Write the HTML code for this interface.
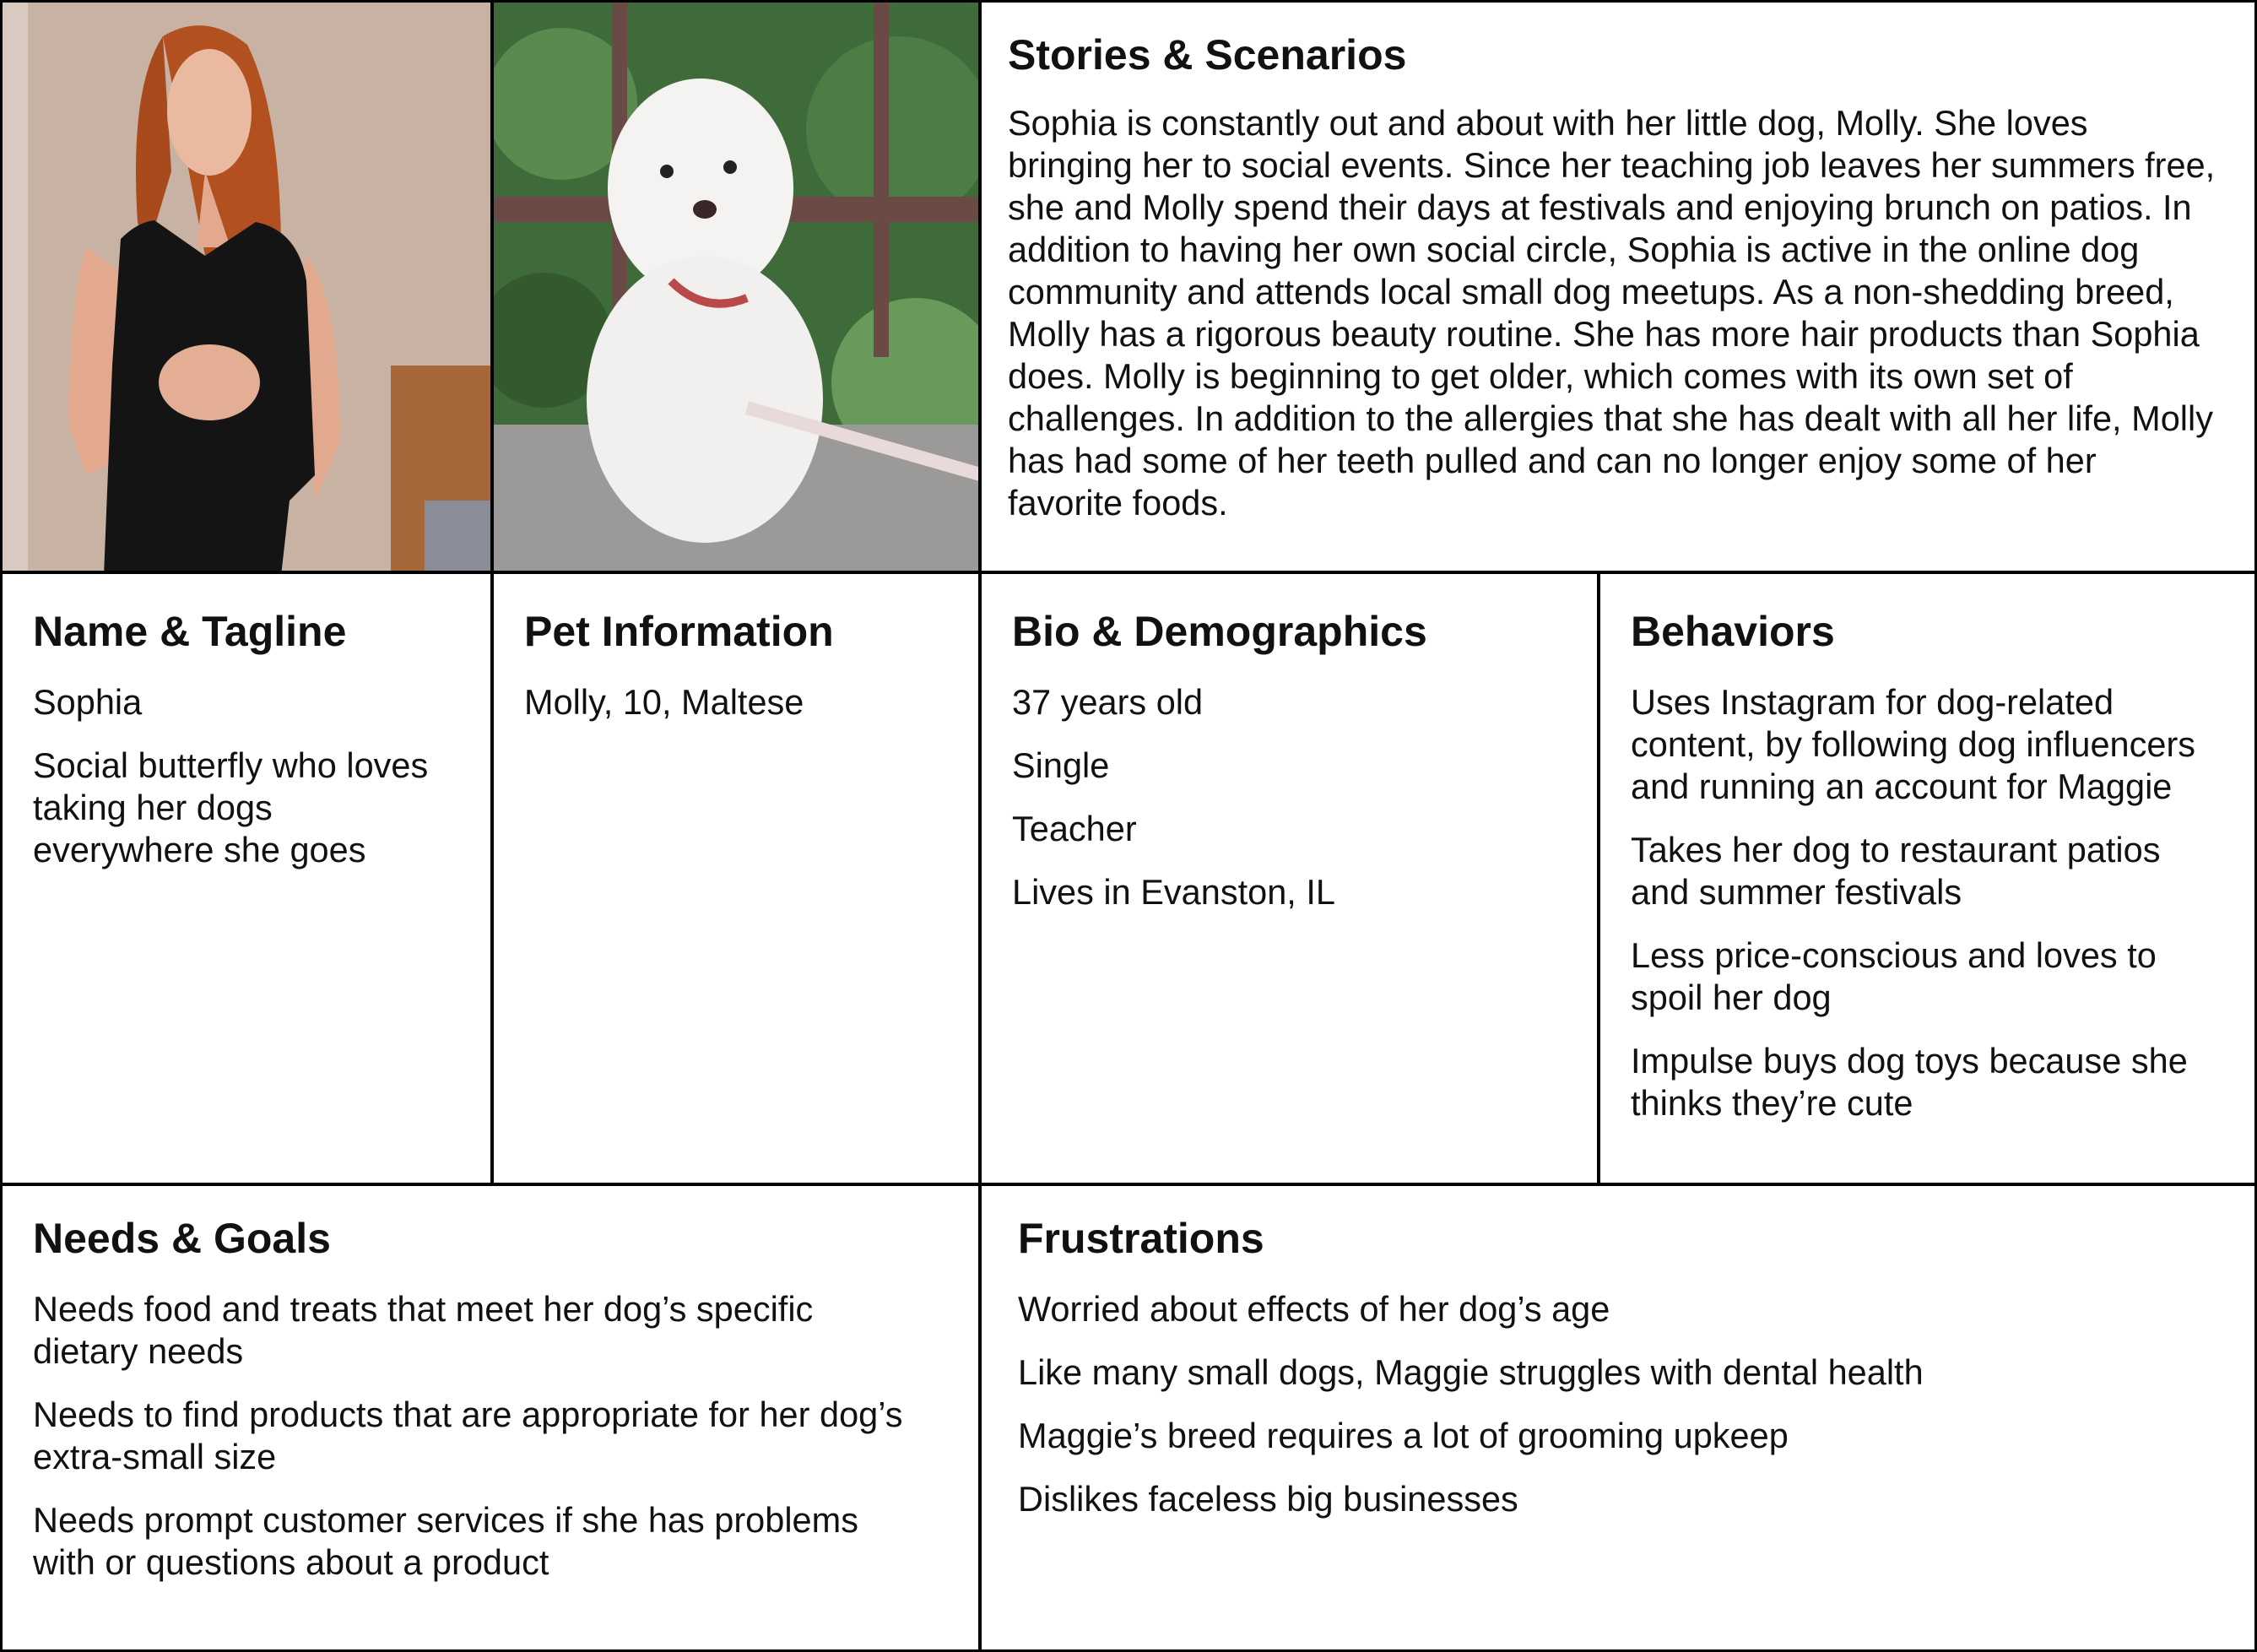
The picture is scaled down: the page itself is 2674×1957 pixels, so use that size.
<!DOCTYPE html>
<html><head><meta charset="utf-8"><style>
html,body{margin:0;padding:0;background:#fff;}
body{width:2674px;height:1957px;position:relative;overflow:hidden;font-family:"Liberation Sans",Arial,sans-serif;color:#111;}
.c{position:absolute;box-sizing:border-box;border:2px solid #000;}
h2{margin:0;font-size:50px;line-height:56px;font-weight:bold;}
p{margin:0 0 25px 0;font-size:41.5px;line-height:50px;white-space:nowrap;}
.in{position:absolute;left:36px;top:40px;}
.body{margin-top:31px;}
</style></head><body>
<div class="c" style="left:0;top:0;width:584px;height:679px;border-width:3px;overflow:hidden">
<svg width="584" height="679" viewBox="0 0 584 679">
<rect width="584" height="679" fill="#c8b2a4"/>
<rect width="30" height="679" fill="#d8cac0"/>
<rect x="460" y="430" width="124" height="249" fill="#a6683a"/>
<rect x="500" y="590" width="84" height="89" fill="#8a8c98"/>
<path d="M190 40 Q240 10 290 50 Q330 130 330 300 Q350 420 360 470 L280 480 L240 300 Z" fill="#b2511f"/>
<path d="M190 40 Q150 100 160 260 L170 300 L200 200 Z" fill="#a84a1c"/>
<ellipse cx="245" cy="130" rx="50" ry="75" fill="#e9b9a0"/>
<path d="M240 200 L230 290 L270 290 Z" fill="#e3a98e"/>
<path d="M100 290 Q80 340 78 500 L100 560 L140 540 L140 320 Z" fill="#e3a98e"/>
<path d="M360 300 Q400 350 400 520 L370 590 L350 330 Z" fill="#e3a98e"/>
<path d="M140 280 Q160 260 180 258 L240 300 L300 260 Q350 270 360 330 L370 560 L340 590 L330 679 L120 679 L130 430 Z" fill="#141414"/>
<ellipse cx="245" cy="450" rx="60" ry="45" fill="#e3ae94"/>
</svg></div>
<div class="c" style="left:582px;top:0;width:580px;height:679px;border-width:3px;overflow:hidden">
<svg width="580" height="679" viewBox="0 0 580 679">
<rect width="580" height="679" fill="#3f6b3a"/>
<circle cx="80" cy="120" r="90" fill="#5a8a4e"/>
<circle cx="480" cy="150" r="110" fill="#4d7d45"/>
<circle cx="500" cy="450" r="100" fill="#6a9a5a"/>
<circle cx="60" cy="400" r="80" fill="#34592f"/>
<rect x="0" y="230" width="580" height="30" fill="#6a4a44"/>
<rect x="140" y="0" width="18" height="420" fill="#6a4a44"/>
<rect x="450" y="0" width="18" height="420" fill="#6a4a44"/>
<rect x="0" y="500" width="580" height="179" fill="#9c9a98"/>
<ellipse cx="245" cy="220" rx="110" ry="130" fill="#f4f3f2"/>
<ellipse cx="250" cy="470" rx="140" ry="170" fill="#f1f0ef"/>
<circle cx="205" cy="200" r="8" fill="#222"/><circle cx="280" cy="195" r="8" fill="#222"/>
<ellipse cx="250" cy="245" rx="14" ry="11" fill="#3a2828"/>
<path d="M210 330 Q250 370 300 350" stroke="#b84a4a" stroke-width="10" fill="none"/>
<path d="M300 480 L580 560" stroke="#e8dada" stroke-width="16"/>
</svg></div>
<div class="c" style="left:1160px;top:0;width:1514px;height:679px;border-width:3px">
<div class="in" style="left:31px;top:34px"><h2>Stories &amp; Scenarios</h2>
<div style="margin-top:28px"><p style="margin:0">Sophia is constantly out and about with her little dog, Molly. She loves<br>bringing her to social events. Since her teaching job leaves her summers free,<br>she and Molly spend their days at festivals and enjoying brunch on patios. In<br>addition to having her own social circle, Sophia is active in the online dog<br>community and attends local small dog meetups. As a non-shedding breed,<br>Molly has a rigorous beauty routine. She has more hair products than Sophia<br>does. Molly is beginning to get older, which comes with its own set of<br>challenges. In addition to the allergies that she has dealt with all her life, Molly<br>has had some of her teeth pulled and can no longer enjoy some of her<br>favorite foods.</p></div></div></div>

<div class="c" style="left:0;top:677px;width:584px;height:727px;border-width:3px">
<div class="in"><h2>Name &amp; Tagline</h2><div class="body"><p>Sophia</p><p>Social butterfly who loves<br>taking her dogs<br>everywhere she goes</p></div></div></div>
<div class="c" style="left:582px;top:677px;width:580px;height:727px;border-width:3px">
<div class="in"><h2>Pet Information</h2><div class="body"><p>Molly, 10, Maltese</p></div></div></div>
<div class="c" style="left:1160px;top:677px;width:735px;height:727px;border-width:3px">
<div class="in"><h2>Bio &amp; Demographics</h2><div class="body"><p>37 years old</p><p>Single</p><p>Teacher</p><p>Lives in Evanston, IL</p></div></div></div>
<div class="c" style="left:1893px;top:677px;width:781px;height:727px;border-width:3px">
<div class="in"><h2>Behaviors</h2><div class="body"><p>Uses Instagram for dog-related<br>content, by following dog influencers<br>and running an account for Maggie</p><p>Takes her dog to restaurant patios<br>and summer festivals</p><p>Less price-conscious and loves to<br>spoil her dog</p><p>Impulse buys dog toys because she<br>thinks they’re cute</p></div></div></div>

<div class="c" style="left:0;top:1402px;width:1162px;height:555px;border-width:3px">
<div class="in" style="top:34px"><h2>Needs &amp; Goals</h2><div class="body"><p>Needs food and treats that meet her dog’s specific<br>dietary needs</p><p>Needs to find products that are appropriate for her dog’s<br>extra-small size</p><p>Needs prompt customer services if she has problems<br>with or questions about a product</p></div></div></div>
<div class="c" style="left:1160px;top:1402px;width:1514px;height:555px;border-width:3px">
<div class="in" style="left:43px;top:34px"><h2>Frustrations</h2><div class="body"><p>Worried about effects of her dog’s age</p><p>Like many small dogs, Maggie struggles with dental health</p><p>Maggie’s breed requires a lot of grooming upkeep</p><p>Dislikes faceless big businesses</p></div></div></div>
</body></html>
